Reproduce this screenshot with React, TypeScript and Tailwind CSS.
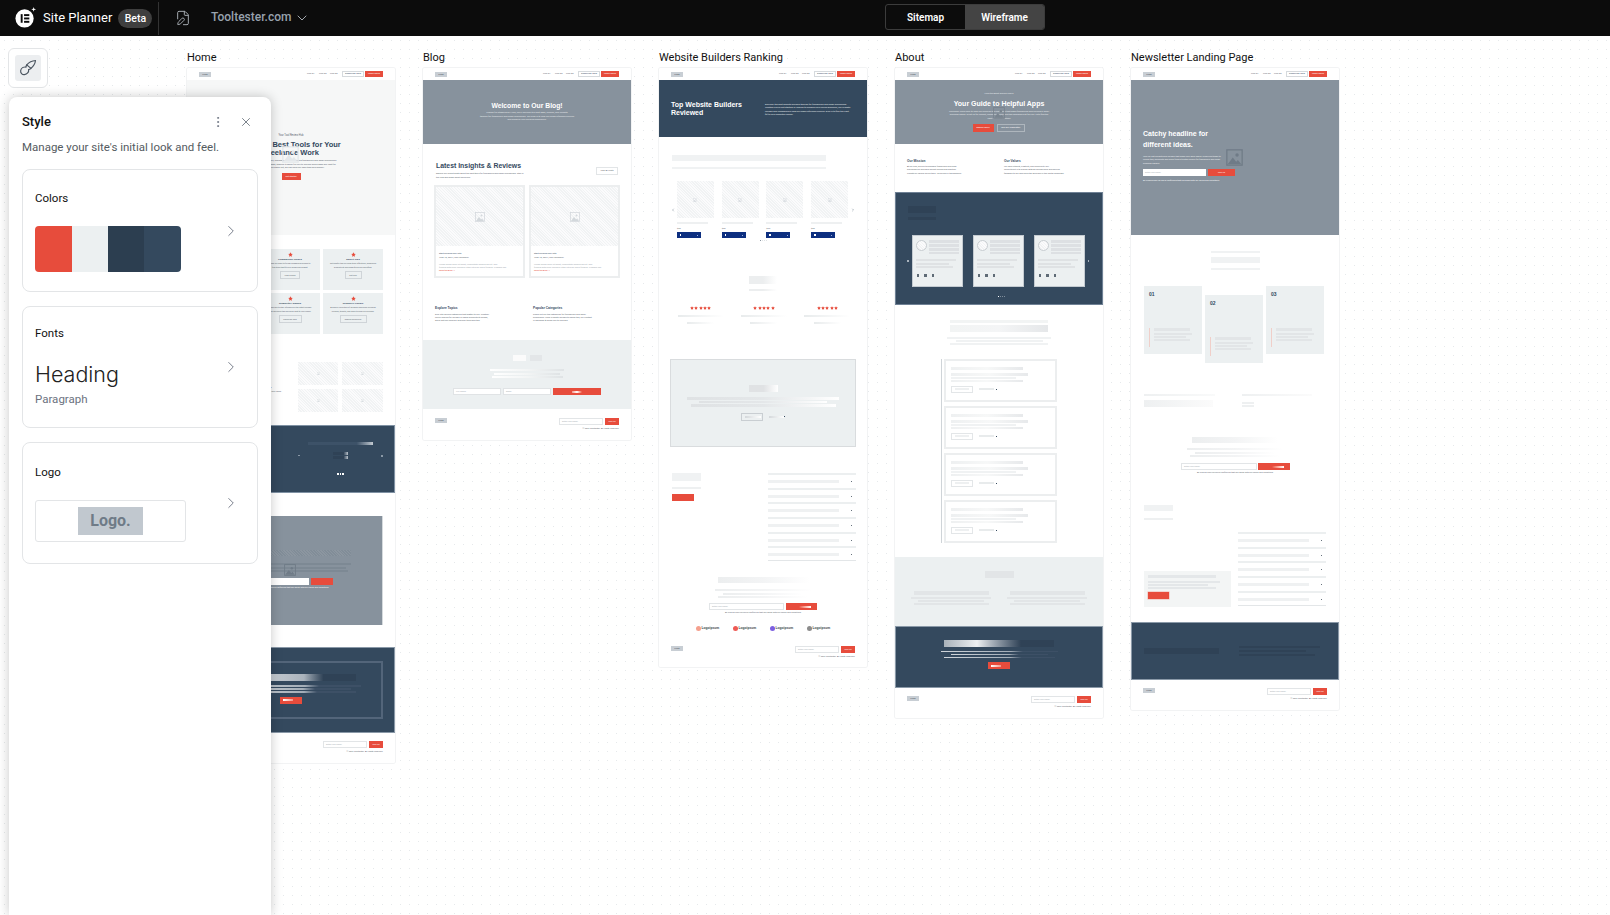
import React from "react";
import { ChevronDown, ChevronRight, EllipsisVertical, FilePen, X } from "lucide-react";

const WIRE = "font-['Liberation_Sans',Arial,sans-serif]";
const HATCH = "bg-[repeating-linear-gradient(45deg,#f1f3f4_0px,#f1f3f4_1px,#fbfbfc_1px,#fbfbfc_2px)]";
const FRAME = "w-[208px] bg-white ring-1 ring-[#f2f3f4] rounded-[2px] flex flex-col overflow-hidden";

function Pic({ c = "w-[5px] h-[5px]", fill = "#d3d8dc" }: { c?: string; fill?: string }) {
  return (
    <svg viewBox="0 0 20 20" className={c}>
      <rect x="1" y="1" width="18" height="18" fill="none" stroke={fill} strokeWidth="1.5" />
      <circle cx="13" cy="7" r="2" fill={fill} />
      <path d="M2 18l6-8 4 5 2-2 4 5z" fill={fill} />
    </svg>
  );
}

function Star({ c = "w-[5px] h-[5px]" }: { c?: string }) {
  return (
    <svg viewBox="0 0 20 20" className={`${c} shrink-0`}>
      <path d="M10 1l2.800 5.800 6.200.9-4.500 4.400 1.100 6.400L10 15.500 4.400 18.500l1.100-6.400L1 7.700l6.200-.9z" fill="#e74c3c" />
    </svg>
  );
}

function Nav() {
  return (
    <div className="h-[12px] shrink-0 flex items-center justify-between pl-[12px] pr-[12px] bg-white">
      <div className="w-[12px] h-[5px] bg-[#c8ced4] text-[2.500px] leading-[5px] text-center text-[#4a5560]">Logo</div>
      <div className="flex items-center text-[2.400px] text-[#5c6670]">
        <span className="w-[12px]">Link 01</span>
        <span className="w-[11px]">Link 02</span>
        <span className="w-[12px]">Link 03</span>
        <span className="w-[22px] h-[6px] border border-[#d6dadd] leading-[4px] text-center text-[#34495e]">Subscribe Now</span>
        <span className="w-[18px] h-[6px] ml-[1px] bg-[#e74c3c] leading-[6px] text-center text-white">Learn More</span>
      </div>
    </div>
  );
}

function Footer({ h = "h-[30px]", pt = "pt-[8px]" }: { h?: string; pt?: string }) {
  return (
    <div className={`${h} ${pt} shrink-0 px-[12px] flex justify-between items-start bg-white`}>
      <div className="w-[12px] h-[5px] bg-[#c8ced4] text-[2.500px] leading-[5px] text-center text-[#4a5560]">Logo</div>
      <div className="flex flex-col items-end">
        <div className="flex gap-[2px]">
          <div className="w-[44px] h-[7px] border border-[#e2e5e7] px-[2px] text-[2.200px] leading-[5px] text-[#a8aeb4]">Enter your email</div>
          <div className="w-[14px] h-[7px] bg-[#e74c3c] text-[2.200px] leading-[7px] text-center text-white">Join Us</div>
        </div>
        <div className="mt-[2px] text-[2.200px] leading-[4px] text-[#5c6670]">© 2024 Tooltester. All rights reserved.</div>
      </div>
    </div>
  );
}

function Faq({ rows, w = "w-[88px]" }: { rows: number; w?: string }) {
  return (
    <div className={`${w} border-b border-[#e3e6e8]`}>
      {Array.from({ length: rows }).map((_, i) => (
        <div key={i} className="h-[14.700px] border-t-2 border-[#eceff0] flex items-center justify-between pr-[4px]">
          <div className="w-[71px] h-[3px] bg-[#eff1f2]" />
          <div className="w-[1px] h-[1px] bg-[#67727d]" />
        </div>
      ))}
    </div>
  );
}

function HomePage() {
  const cards = [
    ["Comparison Guides", "Read our easy-to-follow comparison guides to", "find tools that fit your needs and budget.", "View Guides", "w-[20px]"],
    ["Expert Tips", "Get helpful tips on using tools effectively, enhancing", "productivity and simplifying your workflow.", "Get Tips", "w-[17px]"],
    ["Newsletter Signup", "Subscribe to stay informed on the latest reviews", "and exclusive tips delivered right to your inbox!", "Subscribe Now", "w-[23px]"],
    ["Resource Library", "Access a collection of valuable resources including", "e-books, toolkits, and more to help you succeed.", "Explore Resources", "w-[27px]"],
  ];
  return (
    <div className={`${FRAME} h-[695px]`}>
      <Nav />
      <div className="h-[155px] shrink-0 bg-[#f6f7f7] flex flex-col items-center pt-[54px] relative">
        <div className="text-[2.600px] leading-[4px] text-[#5c6670]">Your Tool Review Hub</div>
        <div className={`${WIRE} mt-[3px] text-[7.500px] leading-[8px] font-bold text-[#34495e] text-center whitespace-nowrap`}>
          Find the Best Tools for Your<br />Freelance Work
        </div>
        <p className="mt-[2px] text-[2.300px] leading-[3.500px] text-[#5c6670] text-center whitespace-nowrap">
          Looking for straightforward, unbiased reviews that help freelancers and small businesses<br />
          make sense of the best apps, making it easier for you to choose which apps are right for<br />
          your needs and stand out, we can help you save time and money!
        </p>
        <div className="mt-[3px] w-[19px] h-[7px] bg-[#e74c3c] text-[2.200px] leading-[7px] text-center text-white">Get Started</div>
        <div className="absolute left-[95px] top-[66px]"><Pic c="w-[17px] h-[17px]" fill="#e3e7ea" /></div>
      </div>
      <div className="h-[108px] shrink-0 pt-[14px] pr-[12px] flex justify-end">
        <div className="grid grid-cols-[60px_60px] auto-rows-[41px] gap-x-[3px] gap-y-[3px]">
          {cards.map((c) => (
            <div key={c[0]} className="bg-[#ecf0f1] flex flex-col items-center pt-[3px] text-center">
              <Star />
              <div className={`${WIRE} mt-[1px] text-[2.500px] leading-[4px] font-bold text-[#34495e]`}>{c[0]}</div>
              <div className="text-[2px] leading-[3.600px] text-[#5c6670] whitespace-nowrap">{c[1]}<br />{c[2]}</div>
              <div className={`${c[4]} mt-[1.500px] h-[8px] border border-[#cfd4d8] text-[2px] leading-[6px] text-[#5c6670]`}>{c[3]}</div>
            </div>
          ))}
        </div>
      </div>
      <div className="h-[82px] shrink-0 pt-[19px] pr-[12px] pl-[80px] flex">
        <div className="flex-1 pt-[24px] text-[2.100px] leading-[3.600px] text-[#5c6670] whitespace-nowrap">tools<br />with your inbox.</div>
        <div className="grid grid-cols-[40px_41px] auto-rows-[23px] gap-x-[4px] gap-y-[4px]">
          {[0, 1, 2, 3].map((i) => (
            <div key={i} className={`${HATCH} flex items-center justify-center`}><Pic c="w-[3px] h-[3px]" fill="#cfd5da" /></div>
          ))}
        </div>
      </div>
      <div className="h-[68px] shrink-0 bg-[#34495e] border border-[#8092a4] pt-[16px]">
        <div className="ml-[110px] w-[85px] flex flex-col items-center">
          <div className="w-[65px] h-[3px] bg-gradient-to-r from-[#3d5268] via-[#3d5268] via-75% to-[#c3cad1]" />
          <div className="w-full mt-[7px] flex items-center justify-between">
            <div className="w-[2px] h-[1px] bg-[#8a98a6]" />
            <div className="flex flex-col gap-[1px]">
              <div className="w-[15px] h-[3px] bg-gradient-to-r from-[#2f4256] via-[#2f4256] via-70% to-[#bcc4cc]" />
              <div className="w-[15px] h-[3px] bg-gradient-to-r from-[#2f4256] via-[#2f4256] via-70% to-[#bcc4cc]" />
            </div>
            <div className="w-[2px] h-[2px] bg-[#8a98a6]" />
          </div>
          <div className="mt-[14px] flex gap-[1px]">
            <div className="w-[1.500px] h-[2px] bg-white" />
            <div className="w-[1.500px] h-[2px] bg-white" />
            <div className="w-[1.500px] h-[2px] bg-white" />
          </div>
        </div>
      </div>
      <div className="mt-[23px] mx-[12px] h-[109px] shrink-0 bg-[#87929d] border-r border-[#d5dadd] flex flex-col items-center pt-[34px] relative">
        <div className="w-[120px] h-[6px] bg-[repeating-linear-gradient(45deg,#818d98_0px,#818d98_1px,#8c96a0_1px,#8c96a0_2px)]" />
        <div className="mt-[7px] w-[120px] h-[2px] bg-[#7d8994]" />
        <div className="mt-[1.500px] w-[110px] h-[2px] bg-[#7d8994]" />
        <div className="mt-[1.500px] w-[115px] h-[2px] bg-[#7d8994]" />
        <div className="mt-[6px] flex gap-[2px] ml-[-2px]">
          <div className="w-[63px] h-[7px] bg-white" />
          <div className="w-[22px] h-[7px] bg-[#e74c3c]" />
        </div>
        <div className="mt-[1px] text-[2.100px] leading-[4px] text-white whitespace-nowrap">By clicking Sign Up you're confirming that you agree with our Terms and Conditions</div>
        <div className="absolute left-[85px] top-[48px]"><Pic c="w-[12px] h-[12px]" fill="#6f7b87" /></div>
      </div>
      <div className="mt-[22px] h-[86px] shrink-0 bg-[#34495e] border border-[#8a99a8] pt-[13px] px-[11px]">
        <div className="h-[58px] border-2 border-[#53657a] flex flex-col items-center pt-[11px]">
          <div className="w-[130px] h-[7px] bg-gradient-to-r from-[#e8eaec] via-[#aab3bc] via-60% to-[#2f4256] to-75%" />
          <div className="mt-[4px] w-[140px] h-[1.500px] bg-gradient-to-r from-[#d8dcdf] via-[#a3adb7] via-60% to-[#3d5066] to-70%" />
          <div className="mt-[1.500px] w-[120px] h-[1.500px] bg-gradient-to-r from-[#d8dcdf] via-[#a3adb7] via-60% to-[#3d5066] to-70%" />
          <div className="mt-[1.500px] w-[130px] h-[1.500px] bg-gradient-to-r from-[#d8dcdf] via-[#a3adb7] via-60% to-[#3d5066] to-70%" />
          <div className="mt-[4px] w-[22px] h-[7px] bg-[#e74c3c] flex items-center px-[3px]">
            <div className="w-[10px] h-[2px] bg-gradient-to-r from-[#fff] to-[#f1958a]" />
          </div>
        </div>
      </div>
      <Footer />
    </div>
  );
}

function BlogPage() {
  const post = (
    <div className="h-[93px] border-2 border-[#eceeef] bg-white flex flex-col">
      <div className={`${HATCH} h-[59px] shrink-0 flex items-center justify-center`}><Pic c="w-[10px] h-[10px]" fill="#d3d8dc" /></div>
      <div className="pt-[6px] pl-[3px] text-[2.200px] leading-[4px] text-[#5c6670] whitespace-nowrap">
        <div className="text-[#34495e]">Start building your lists</div>
        <div>June 18, 2024 | The Freelancer</div>
        <div className="mt-[3px] leading-[3px] text-[#a2a9b0]">Lorem ipsum dolor sit amet, consectetur adipiscing elit. Sed<br />fringilla ante nunc convallis vitae ultricies libero fringilla. Vivamus nec.</div>
        <div className="text-[#e74c3c]">Read the Blog →</div>
      </div>
    </div>
  );
  return (
    <div className={`${FRAME} h-[372px]`}>
      <Nav />
      <div className="h-[64px] shrink-0 bg-[#87929d] flex flex-col items-center pt-[22px] text-white">
        <div className={`${WIRE} text-[6.800px] leading-[8px] font-bold`}>Welcome to Our Blog!</div>
        <p className="mt-[1px] text-[2.300px] leading-[3.500px] text-center whitespace-nowrap text-[#e6e9eb]">
          Thanks for stopping by! Here, you'll discover the best apps, reviews, and insights<br />
          tailored for freelancers and small businesses. Our goal is to help you make informed choices<br />
          and enhance your working experience.
        </p>
      </div>
      <div className="h-[142px] shrink-0 px-[11px] pt-[18px]">
        <div className="h-[23px] flex justify-between px-[2px]">
          <div>
            <div className={`${WIRE} text-[6.900px] leading-[8px] font-bold text-[#34495e]`}>Latest Insights &amp; Reviews</div>
            <p className="mt-[2px] text-[2.200px] leading-[3.700px] text-[#5c6670] whitespace-nowrap">Explore our recent posts about the best tools for freelancers and small businesses. Stay in<br />the loop and make smart decisions.</p>
          </div>
          <div className="mt-[5px] w-[22px] h-[8px] border border-[#e2e5e7] text-[2.100px] leading-[6px] text-center text-[#5c6670]">View All Posts</div>
        </div>
        <div className="grid grid-cols-[91px_91px] gap-[4px]">{post}{post}</div>
      </div>
      <div className="h-[54px] shrink-0 pl-[12px] pr-[10px] pt-[20px] flex gap-[12px]">
        <div className="w-[86px]">
          <div className={`${WIRE} text-[3.200px] leading-[4px] font-bold text-[#34495e]`}>Explore Topics</div>
          <p className="mt-[3px] text-[2.200px] leading-[3px] text-[#5c6670] whitespace-nowrap">Dive into various categories that matter to you. Whether<br />you're looking for reviews or handy productivity guides,<br />we've got you covered. Discover tools and tips.</p>
        </div>
        <div>
          <div className={`${WIRE} text-[3.200px] leading-[4px] font-bold text-[#34495e]`}>Popular Categories</div>
          <p className="mt-[3px] text-[2.200px] leading-[3px] text-[#5c6670] whitespace-nowrap">Check out our top categories for freelancers and small<br />businesses. From in-depth reviews to handy tips, our content<br />is designed to guide you to success.</p>
        </div>
      </div>
      <div className="h-[69px] shrink-0 bg-[#ecf0f1] flex flex-col items-center pt-[15px]">
        <div className="flex gap-[4px]">
          <div className="w-[13px] h-[6px] bg-[#fbfbfb]" />
          <div className="w-[12px] h-[6px] bg-[#e3e6e8]" />
        </div>
        <div className="mt-[8px] w-[74px] h-[2px] bg-gradient-to-r from-[#fff] via-[#f3f5f5] to-[#dfe3e5]" />
        <div className="mt-[1.500px] w-[66px] h-[2px] bg-gradient-to-r from-[#fff] via-[#f3f5f5] to-[#dfe3e5]" />
        <div className="mt-[1.500px] w-[71px] h-[2px] bg-gradient-to-r from-[#fff] via-[#f3f5f5] to-[#dfe3e5]" />
        <div className="mt-[10px] flex gap-[2px]">
          <div className="w-[48px] h-[7px] bg-white border border-[#e0e3e5] pl-[2px] text-[2.200px] leading-[5px] text-[#a8aeb4]">Full Name</div>
          <div className="w-[48px] h-[7px] bg-white border border-[#e0e3e5] pl-[2px] text-[2.200px] leading-[5px] text-[#a8aeb4]">Email</div>
          <div className="w-[48px] h-[7px] bg-[#e74c3c] flex items-center justify-center">
            <div className="w-[10px] h-[2px] bg-gradient-to-r from-[#f1958a] via-[#fff] to-[#e74c3c]" />
          </div>
        </div>
      </div>
      <Footer h="h-[31px]" pt="pt-[9px]" />
    </div>
  );
}

function WbrPage() {
  const products = ["$29", "$29", "$29", "$39"];
  const LogoItem = ({ c }: { c: string }) => (
    <div className="w-[24px] flex items-center gap-[1px]">
      <div className={`${c} w-[5px] h-[5px] rounded-full shrink-0`} />
      <span className={`${WIRE} text-[3.300px] font-bold text-[#3b4650]`}>Logoipsum</span>
    </div>
  );
  return (
    <div className={`${FRAME} h-[599px]`}>
      <Nav />
      <div className="h-[57px] shrink-0 bg-[#34495e] flex pl-[12px] pt-[21px] text-white">
        <div className={`${WIRE} w-[94px] text-[7px] leading-[8px] font-bold whitespace-nowrap`}>Top Website Builders<br />Reviewed</div>
        <p className="pt-[2px] text-[2.300px] leading-[3.400px] whitespace-nowrap text-[#e6e9eb]">
          Discover the best website builders tailored for freelancers and small businesses.<br />
          Whether you're just starting or looking to enhance your online presence, our in-depth<br />
          reviews and comparisons help you make informed choices. Dive in to find the right<br />
          fit for your website's needs!
        </p>
      </div>
      <div className="h-[123px] shrink-0 pt-[18px] px-[13px]">
        <div className="w-[154px] h-[6px] bg-[#f0f2f3]" />
        <div className="w-[154px] h-[2px] mt-[6px] bg-[#f0f2f3]" />
        <div className="mt-[12px] flex items-start -mx-[1px]">
          <div className="w-[6px] pt-[27px]"><ChevronRight className="w-[4px] h-[4px] rotate-180 text-[#34495e]" /></div>
          <div className="flex gap-[7.700px]">
            {products.map((p, i) => (
              <div key={i} className="w-[37px]">
                <div className={`${HATCH} h-[37px] flex items-center justify-center`}><Pic c="w-[4px] h-[4px]" fill="#cfd5da" /></div>
                <div className="mt-[4px] w-[31px] h-[2px] bg-[#eef0f1]" />
                <div className="mt-[3px] text-[2.300px] leading-[4px] text-[#5c6670]">{p}</div>
                <div className="mt-[1px] w-[24px] h-[6px] bg-[#0d2f80] flex items-center justify-between px-[3px]">
                  <div className="w-[1.500px] h-[1.500px] bg-white" />
                  <div className="w-[0.800px] h-[0.800px] bg-[#9bb0de]" />
                </div>
              </div>
            ))}
          </div>
          <div className="ml-[3px] pt-[27px]"><ChevronRight className="w-[4px] h-[4px] text-[#34495e]" /></div>
        </div>
        <div className="mt-[2px] flex justify-center gap-[1px]">
          <div className="w-[1px] h-[1px] bg-[#8a95a0]" />
          <div className="w-[1px] h-[1px] bg-[#e1e4e6]" />
          <div className="w-[1px] h-[1px] bg-[#e1e4e6]" />
          <div className="w-[1px] h-[1px] bg-[#e1e4e6]" />
        </div>
      </div>
      <div className="h-[99px] shrink-0 pt-[16px] flex flex-col items-center">
        <div className="w-[28px] h-[8px] bg-gradient-to-r from-[#eceeef] via-[#eceeef] to-white" />
        <div className="w-[28px] h-[2px] mt-[5px] bg-gradient-to-r from-[#eceeef] via-[#eceeef] to-white" />
        <div className="mt-[15px] w-full pl-[18px] pr-[16px] grid grid-cols-3 gap-[16px]">
          {[0, 1, 2].map((i) => (
            <div key={i} className="flex flex-col items-center">
              <div className="flex gap-[0.300px]">{[0, 1, 2, 3, 4].map((s) => <Star key={s} c="w-[4px] h-[4px]" />)}</div>
              <div className="mt-[5px] w-[46px] h-[2px] bg-gradient-to-r from-[#e8ebec] to-white" />
              <div className="mt-[5px] w-[27px] h-[2px] bg-gradient-to-r from-[#e8ebec] to-white" />
            </div>
          ))}
        </div>
      </div>
      <div className="mx-[11px] h-[88px] shrink-0 bg-[#ecf0f1] border border-[#d9dcde] flex flex-col items-center pt-[25px]">
        <div className="w-[29px] h-[7px] bg-gradient-to-r from-[#e0e2e4] via-[#e0e2e4] to-white" />
        <div className="mt-[5px] w-[152px] h-[2.500px] bg-gradient-to-r from-[#dfe2e4] via-[#e4e7e9] to-white" />
        <div className="mt-[1px] w-[128px] h-[2.500px] bg-gradient-to-r from-[#dfe2e4] via-[#e4e7e9] to-white" />
        <div className="mt-[1px] w-[145px] h-[2.500px] bg-gradient-to-r from-[#dfe2e4] via-[#e4e7e9] to-white" />
        <div className="mt-[6px] flex items-center gap-[6px]">
          <div className="w-[22px] h-[8px] border border-[#c9ced2] flex items-center pl-[3px]"><div className="w-[16px] h-[2px] bg-gradient-to-r from-[#d4d8db] to-white" /></div>
          <div className="w-[15px] h-[2px] bg-gradient-to-r from-[#d4d8db] to-white" />
          <div className="w-[1px] h-[1px] -ml-[6px] bg-[#34495e]" />
        </div>
      </div>
      <div className="h-[114px] shrink-0 pt-[26px] pl-[13px] pr-[11px] flex justify-between">
        <div>
          <div className="w-[29px] h-[8px] bg-[#f0f2f3]" />
          <div className="mt-[6px] w-[29px] h-[2px] bg-[#eef0f1]" />
          <div className="mt-[5px] w-[22px] h-[7px] bg-[#e74c3c]" />
        </div>
        <Faq rows={6} />
      </div>
      <div className="h-[79px] shrink-0 pt-[16px] flex flex-col items-center">
        <div className="w-[92px] h-[6px] ml-[2px] bg-gradient-to-r from-[#eceeef] via-[#f3f4f5] to-white" />
        <div className="mt-[6px] w-[97px] h-[2px] bg-gradient-to-r from-[#eceeef] via-[#f3f4f5] to-white" />
        <div className="mt-[1.500px] w-[80px] h-[2px] bg-gradient-to-r from-[#eceeef] via-[#f3f4f5] to-white" />
        <div className="mt-[1.500px] w-[90px] h-[2px] bg-gradient-to-r from-[#eceeef] via-[#f3f4f5] to-white" />
        <div className="mt-[5px] flex gap-[2px]">
          <div className="w-[75px] h-[7px] border border-[#e2e5e7] pl-[2px] text-[2.200px] leading-[5px] text-[#a8aeb4]">Enter your email</div>
          <div className="w-[31px] h-[7px] bg-[#e74c3c] flex items-center justify-end pr-[6px]"><div className="w-[12px] h-[2px] bg-gradient-to-r from-[#e74c3c] to-white" /></div>
        </div>
        <div className="text-[2.100px] leading-[5px] text-[#5c6670]">By clicking Sign Up you're confirming that you agree with our Terms and Conditions</div>
        <div className="mt-[11px] flex gap-[13px]">
          <LogoItem c="bg-[#f5a08e]" />
          <LogoItem c="bg-[#ee5a55]" />
          <LogoItem c="bg-[#7c5fe0]" />
          <LogoItem c="bg-[#8c8c8c]" />
        </div>
      </div>
      <Footer h="h-[27px]" pt="pt-[6px]" />
    </div>
  );
}

function AboutPage() {
  const Person = () => (
    <div className="w-[51px] h-[52px] bg-[#ecf0f1] border border-[#c4cbd1] pl-[3px] pr-[3px] pt-[4px]">
      <div className="flex gap-[2px]">
        <div className={`${HATCH} w-[11px] h-[11px] rounded-full border border-[#c9ced2] shrink-0`} />
        <div className="flex-1 flex flex-col gap-[1px]">
          <div className="h-[3px] bg-[#dde0e3]" />
          <div className="h-[3px] bg-[#dde0e3]" />
          <div className="h-[3px] bg-[#dde0e3]" />
          <div className="h-[2px] bg-[#dde0e3]" />
        </div>
      </div>
      <div className="mt-[5px] w-[40px] h-[2px] bg-[#dfe2e4]" />
      <div className="mt-[1.500px] w-[33px] h-[2px] bg-[#dfe2e4]" />
      <div className="mt-[1.500px] w-[37px] h-[2px] bg-[#dfe2e4]" />
      <div className="mt-[6px] flex gap-[5px] pl-[1px]">
        <div className="w-[2.500px] h-[2.500px] bg-[#5f6b76]" />
        <div className="w-[2.500px] h-[2.500px] bg-[#5f6b76]" />
        <div className="w-[2.500px] h-[2.500px] bg-[#5f6b76]" />
      </div>
    </div>
  );
  const Row = ({ last }: { last?: boolean }) => (
    <div className={`${last ? "h-[43px]" : "h-[43px] mb-[4px]"} border-2 border-[#eceeef] px-[5px] pt-[6px]`}>
      <div className="w-[72px] h-[3px] bg-gradient-to-r from-[#eef0f1] via-[#f7f8f8] to-[#e7e9eb]" />
      <div className="mt-[3px] w-[77px] h-[2.500px] bg-gradient-to-r from-[#eef0f1] via-[#f7f8f8] to-[#e7e9eb]" />
      <div className="mt-[1px] w-[65px] h-[2px] bg-[#f0f2f3]" />
      <div className="mt-[1px] w-[72px] h-[2px] bg-gradient-to-r from-[#eef0f1] via-[#f7f8f8] to-[#e7e9eb]" />
      <div className="mt-[4px] flex items-center gap-[6px]">
        <div className="w-[22px] h-[7px] border border-[#e3e6e8] flex items-center pl-[3px]"><div className="w-[14px] h-[2px] bg-[#eef0f1]" /></div>
        <div className="w-[15px] h-[2px] bg-[#e8ebec]" />
        <div className="w-[1px] h-[1px] -ml-[4px] bg-[#34495e]" />
      </div>
    </div>
  );
  return (
    <div className={`${FRAME} h-[650px]`}>
      <Nav />
      <div className="h-[64px] shrink-0 bg-[#87929d] flex flex-col items-center pt-[12px] text-white relative">
        <div className="text-[2.500px] leading-[4px] text-[#e6e9eb]">Find the Best Online Tools</div>
        <div className={`${WIRE} mt-[3px] text-[7px] leading-[9px] font-bold`}>Your Guide to Helpful Apps</div>
        <p className="mt-[2px] text-[2.300px] leading-[3.400px] text-center whitespace-nowrap text-[#e6e9eb]">
          Welcome! We're here to help you discover the best apps that make freelancing and running a small<br />
          business easier. Trust us for honest, unbiased guides and tips designed just for you. Let's find the<br />
          right solution together!
        </p>
        <div className="mt-[4px] flex gap-[3px] -ml-[1px]">
          <div className="w-[21px] h-[7.500px] bg-[#e74c3c] text-[2.200px] leading-[7.500px] text-center">Explore Tools</div>
          <div className="w-[28px] h-[7.500px] border border-[#aeb6bd] text-[2.200px] leading-[5.500px] text-center">Join Our Newsletter</div>
        </div>
        <div className="absolute left-[98px] top-[27px]"><Pic c="w-[12px] h-[12px]" fill="#79848f" /></div>
      </div>
      <div className="h-[48px] shrink-0 pt-[15px] pl-[12px] flex gap-[17px]">
        <div className="w-[80px]">
          <div className={`${WIRE} text-[3.200px] leading-[4px] font-bold text-[#34495e]`}>Our Mission</div>
          <p className="mt-[2px] text-[2.100px] leading-[3.300px] text-[#5c6670] whitespace-nowrap">At our core, we aim to empower freelancers and small<br />businesses by providing honest reviews and practical<br />insights on various online tools. We believe in transparency.</p>
        </div>
        <div>
          <div className={`${WIRE} text-[3.200px] leading-[4px] font-bold text-[#34495e]`}>Our Values</div>
          <p className="mt-[2px] text-[2.100px] leading-[3.300px] text-[#5c6670] whitespace-nowrap">We value integrity, creativity, and community. Our<br />commitment is to provide detailed comparisons and genuine<br />feedback to you who value the decisions in this digital landscape.</p>
        </div>
      </div>
      <div className="h-[113px] shrink-0 bg-[#34495e] border border-[#6f8195] pl-[11.500px] pr-[6px] pt-[13px]">
        <div className="w-[28px] h-[7px] bg-[#2f4256]" />
        <div className="w-[28px] h-[3px] mt-[4px] bg-[#2f4256]" />
        <div className="mt-[15px] flex items-center -ml-[0.500px]">
          <div className="w-[1.500px] h-[2px] bg-[#a9b3bd]" />
          <div className="flex gap-[10px] ml-[3px]"><Person /><Person /><Person /></div>
          <div className="w-[1.500px] h-[2px] ml-[3px] bg-[#a9b3bd]" />
        </div>
        <div className="mt-[9px] flex justify-center gap-[1px]">
          <div className="w-[1px] h-[1px] bg-white" />
          <div className="w-[1px] h-[1px] bg-[#7f8d9b]" />
          <div className="w-[1px] h-[1px] bg-[#7f8d9b]" />
          <div className="w-[1px] h-[1px] bg-[#7f8d9b]" />
        </div>
      </div>
      <div className="h-[252px] shrink-0 pt-[15px] flex flex-col items-center">
        <div className="w-[98px] h-[3px] bg-[#f2f4f4]" />
        <div className="w-[98px] h-[7px] mt-[2px] bg-gradient-to-r from-[#f2f4f4] via-[#f4f5f6] to-[#e5e7e9]" />
        <div className="w-[104px] h-[2px] mt-[5px] bg-[#f0f2f3]" />
        <div className="w-[87px] h-[2px] mt-[1px] bg-[#f0f2f3]" />
        <div className="w-[98px] h-[2px] mt-[1px] bg-[#f0f2f3]" />
        <div className="mt-[14px] flex gap-[2px] ml-[-1px]">
          <div className="w-px bg-[#cfd4d8]" />
          <div className="w-[113px]"><Row /><Row /><Row /><Row last /></div>
        </div>
      </div>
      <div className="h-[69px] shrink-0 bg-[#ecf0f1] flex flex-col items-center pt-[14px]">
        <div className="w-[29px] h-[7px] bg-[#e2e5e7]" />
        <div className="mt-[13px] w-full flex justify-center gap-[16px]">
          {[0, 1].map((i) => (
            <div key={i} className="flex flex-col items-center">
              <div className="w-[75px] h-[3.500px] bg-[#e2e5e7]" />
              <div className="mt-[2px] w-[80px] h-[2px] bg-[#e2e5e7]" />
              <div className="mt-[1px] w-[66px] h-[2px] bg-[#e2e5e7]" />
              <div className="mt-[1px] w-[75px] h-[2px] bg-[#e2e5e7]" />
            </div>
          ))}
        </div>
      </div>
      <div className="h-[62px] shrink-0 bg-[#34495e] border border-[#8a99a8] flex flex-col items-center pt-[13px]">
        <div className="w-[110px] h-[7px] bg-gradient-to-r from-[#a9b2ba] via-[#eef0f2] via-30% to-[#2f4256] to-70%" />
        <div className="mt-[3.500px] w-[117px] h-[1.500px] bg-gradient-to-r from-[#d0d5da] via-[#a3adb7] via-60% to-[#3d5066] to-70%" />
        <div className="mt-[1.500px] w-[97px] h-[1.500px] bg-gradient-to-r from-[#d0d5da] via-[#a3adb7] via-60% to-[#3d5066] to-70%" />
        <div className="mt-[1.500px] w-[111px] h-[1.500px] bg-gradient-to-r from-[#d0d5da] via-[#a3adb7] via-60% to-[#3d5066] to-70%" />
        <div className="mt-[4px] w-[22px] h-[7px] bg-[#e74c3c] flex items-center px-[3px]">
          <div className="w-[10px] h-[2px] bg-gradient-to-r from-[#fff] to-[#f1958a]" />
        </div>
      </div>
      <Footer />
    </div>
  );
}

function NewsletterPage() {
  const Step = ({ n, c }: { n: string; c: string }) => (
    <div className={`${c} w-[58px] h-[68px] bg-[#ecf0f1] flex flex-col pl-[5px] pt-[5px]`}>
      <div className={`${WIRE} text-[5px] leading-[6px] font-bold text-[#34495e]`}>{n}</div>
      <div className="mt-auto mb-[7px] border-l border-[#f0cfc9] pl-[4px] -ml-[0.500px] h-[19px]">
        <div className="w-[36px] h-[3px] bg-[#e2e5e7]" />
        <div className="mt-[2px] w-[38px] h-[2px] bg-[#e2e5e7]" />
        <div className="mt-[1px] w-[32px] h-[2px] bg-[#e2e5e7]" />
        <div className="mt-[1px] w-[36px] h-[2px] bg-[#e2e5e7]" />
      </div>
    </div>
  );
  return (
    <div className={`${FRAME} h-[642px]`}>
      <Nav />
      <div className="h-[155px] shrink-0 bg-[#87929d] pl-[12px] pt-[48px] text-white relative">
        <div className={`${WIRE} text-[7px] leading-[11px] font-bold`}>Catchy headline for<br />different ideas.</div>
        <p className="mt-[5px] text-[2.200px] leading-[3.300px] whitespace-nowrap text-[#eef0f1]">
          Join us! Get insights and reviews that make your work easier. Subscribe today to<br />
          unlock tips, discounts and more from a trusted source for freelancers and small<br />
          business owners.
        </p>
        <div className="mt-[4px] flex gap-[2px]">
          <div className="w-[63px] h-[7px] bg-white pl-[2px] text-[2.200px] leading-[7px] text-[#a8aeb4]">Enter your email</div>
          <div className="w-[27px] h-[7px] bg-[#e74c3c] text-[2.200px] leading-[7px] text-center">Join Us</div>
        </div>
        <div className="mt-[3px] text-[2.100px] leading-[4px] whitespace-nowrap">By clicking Sign Up you're confirming that you agree with our Terms and Conditions</div>
        <div className="absolute left-[95px] top-[69px]"><Pic c="w-[17px] h-[17px]" fill="#6f7b87" /></div>
      </div>
      <div className="h-[140px] shrink-0 pt-[16px] px-[13px] flex flex-col">
        <div className="flex flex-col items-center">
          <div className="w-[49px] h-[2px] bg-[#f0f2f3]" />
          <div className="w-[49px] h-[6px] mt-[4px] bg-[#f0f2f3]" />
          <div className="w-[49px] h-[2px] mt-[5px] bg-[#f0f2f3]" />
        </div>
        <div className="mt-[16px] flex items-start gap-[3px]">
          <Step n="01" c="" />
          <Step n="02" c="mt-[9px]" />
          <Step n="03" c="" />
        </div>
      </div>
      <div className="h-[50px] shrink-0 pt-[19px] px-[13px] flex gap-[27px]">
        <div className="w-[71px]">
          <div className="h-[2px] bg-gradient-to-r from-[#eef0f1] to-[#f9fafa]" />
          <div className="mt-[4px] w-[69px] h-[7px] bg-gradient-to-r from-[#eef0f1] to-[#fbfbfb]" />
        </div>
        <div>
          <div className="w-[70px] h-[2px] bg-gradient-to-r from-[#eef0f1] to-[#fbfbfb]" />
          <div className="mt-[6px] w-[12px] h-[2px] bg-[#eef0f1]" />
          <div className="mt-[1px] w-[12px] h-[2px] bg-[#eef0f1]" />
        </div>
      </div>
      <div className="h-[65px] shrink-0 pt-[12px] flex flex-col items-center">
        <div className="w-[86px] h-[6px] bg-gradient-to-r from-[#eceeef] via-[#f3f4f5] to-white" />
        <div className="mt-[5px] w-[96px] h-[2px] bg-gradient-to-r from-[#eceeef] via-[#f3f4f5] to-white" />
        <div className="mt-[1.500px] w-[80px] h-[2px] bg-gradient-to-r from-[#eceeef] via-[#f3f4f5] to-white" />
        <div className="mt-[1.500px] w-[90px] h-[2px] bg-gradient-to-r from-[#eceeef] via-[#f3f4f5] to-white" />
        <div className="mt-[6px] flex gap-[1px] ml-[1px]">
          <div className="w-[76px] h-[7px] border border-[#e2e5e7] pl-[2px] text-[2.200px] leading-[5px] text-[#a8aeb4]">Enter your email</div>
          <div className="w-[32px] h-[7px] bg-[#e74c3c] flex items-center justify-end pr-[6px]"><div className="w-[12px] h-[2px] bg-gradient-to-r from-[#e74c3c] to-white" /></div>
        </div>
        <div className="text-[2.100px] leading-[5px] text-[#5c6670]">By clicking Sign Up you're confirming that you agree with our Terms and Conditions</div>
      </div>
      <div className="h-[132px] shrink-0 pt-[15px] pl-[13px] pr-[13px] flex justify-between">
        <div className="flex flex-col">
          <div className="w-[29px] h-[6px] bg-[#f0f2f3]" />
          <div className="mt-[7px] w-[29px] h-[2px] bg-[#eef0f1]" />
          <div className="mt-[51px] w-[87px] h-[36px] bg-[#f3f5f5] pl-[4px] pt-[4px]">
            <div className="w-[68px] h-[3px] bg-[#e4e7e9]" />
            <div className="mt-[3px] w-[72px] h-[2px] bg-[#e4e7e9]" />
            <div className="mt-[1px] w-[60px] h-[2px] bg-[#e4e7e9]" />
            <div className="mt-[1px] w-[68px] h-[2px] bg-[#e4e7e9]" />
            <div className="mt-[3px] w-[21px] h-[7px] bg-[#e74c3c] ring-[0.5px] ring-[#f1b4ac]" />
          </div>
        </div>
        <div className="pt-[27px]"><Faq rows={5} /></div>
      </div>
      <div className="h-[58px] shrink-0 bg-[#34495e] border border-[#8a99a8] pl-[12px] pr-[18px] flex items-center justify-between">
        <div className="w-[75px] h-[6px] bg-[#2f4256]" />
        <div className="flex flex-col gap-[2px]">
          <div className="w-[81px] h-[2px] bg-[#2f4256]" />
          <div className="w-[67px] h-[2px] bg-[#2f4256]" />
          <div className="w-[76px] h-[2px] bg-[#2f4256]" />
        </div>
      </div>
      <Footer />
    </div>
  );
}

function Sheet({ title, children }: { title: string; children: React.ReactNode }) {
  return (
    <div className="w-[208px] shrink-0">
      <div className="h-[20px] pt-[1px] text-[11px] leading-[18px] text-[#111] whitespace-nowrap">{title}</div>
      {children}
    </div>
  );
}

function Card({ h, label, children }: { h: string; label: string; children: React.ReactNode }) {
  return (
    <div className={`${h} border border-[#e3e5e7] rounded-[8px] flex items-center justify-between pl-[12px] pr-[17px]`}>
      <div className="flex flex-col">
        <div className="text-[11.500px] leading-[16px] text-[#111]">{label}</div>
        {children}
      </div>
      <ChevronRight className="w-[18px] h-[18px] text-[#6b7280]" strokeWidth={1.2} />
    </div>
  );
}

export default function App() {
  return (
    <div className="w-[1610px] h-[915px] overflow-hidden flex flex-col font-[Roboto,sans-serif] bg-white">
      <header className="h-[36px] shrink-0 bg-[#0c0c0c] flex items-center text-white relative">
        <div className="w-[159px] h-[33px] flex items-center pl-[14px] border-r border-[#333]">
          <svg viewBox="0 0 24 24" className="w-[23px] h-[23px] shrink-0 -mt-[2px]">
            <circle cx="11" cy="13" r="9.500" fill="#fff" />
            <rect x="7" y="8.500" width="2" height="9" fill="#0c0c0c" />
            <rect x="10.500" y="8.500" width="5.500" height="2" fill="#0c0c0c" />
            <rect x="10.500" y="12" width="5.500" height="2" fill="#0c0c0c" />
            <rect x="10.500" y="15.500" width="5.500" height="2" fill="#0c0c0c" />
            <path d="M20.500 1l.6 1.900 1.900.6-1.900.6-.6 1.900-.6-1.900-1.900-.6 1.900-.6z" fill="#fff" />
          </svg>
          <span className="ml-[6px] text-[13px] whitespace-nowrap">Site Planner</span>
          <span className="ml-[6px] h-[19px] w-[34px] rounded-full bg-[#3f3f3f] text-[10.500px] font-medium leading-[19px] text-center shrink-0">Beta</span>
        </div>
        <FilePen className="ml-[16px] w-[16px] h-[16px] text-[#a3a9af]" strokeWidth={1.5} />
        <span className="ml-[20px] -mt-[3px] text-[12px] font-medium text-[#98a2ad] whitespace-nowrap">Tooltester.com</span>
        <ChevronDown className="ml-[3px] w-[16px] h-[16px] text-[#a3a9af]" strokeWidth={1.5} />
        <div className="absolute left-[885px] top-[4px] h-[26px] w-[160px] rounded-[3px] border border-[#3c3c3c] flex overflow-hidden text-[10px] font-semibold">
          <div className="w-[79px] flex items-center justify-center">Sitemap</div>
          <div className="flex-1 bg-[#444] flex items-center justify-center">Wireframe</div>
        </div>
      </header>
      <main className="flex-1 relative pl-[187px] pt-[12px] flex items-start gap-[28px] bg-[radial-gradient(circle,#e6e9eb_0.6px,transparent_0.7px)] bg-[size:9px_9px]">
        <Sheet title="Home"><HomePage /></Sheet>
        <Sheet title="Blog"><BlogPage /></Sheet>
        <Sheet title="Website Builders Ranking"><WbrPage /></Sheet>
        <Sheet title="About"><AboutPage /></Sheet>
        <Sheet title="Newsletter Landing Page"><NewsletterPage /></Sheet>

        <div className="absolute left-[8px] top-[12px] w-[40px] h-[40px] bg-white border border-[#e3e5e7] rounded-[6px] flex items-center justify-center">
          <div className="w-[26px] h-[26px] rounded-[3px] bg-[#eceef0] flex items-center justify-center">
            <svg viewBox="0 0 24 24" className="w-[20px] h-[20px]" fill="none" stroke="#4b5560" strokeWidth="1.400" strokeLinecap="round" strokeLinejoin="round">
              <path d="M21 3c-4 .3-8 2.300-10.500 5.200l5 4.300C18.500 10 20.500 7 21 3z" />
              <path d="M10.500 8.200c-.6 1-.9 1.800-1 2.600M15.500 12.500c-.9.700-1.800 1.200-2.700 1.300" />
              <path d="M9.500 10.800c-2.800-.3-5.800 1.200-6.300 4.300-.4 2.800 1.800 5.200 4.500 4.900 3.200-.3 5.500-3 5.100-6.200" />
            </svg>
          </div>
        </div>

        <aside className="absolute left-[9px] top-[61px] bottom-0 w-[262px] bg-white rounded-t-[8px] shadow-[0_0_12px_rgba(0,0,0,0.22)] px-[13px] pt-[15px]">
          <div className="h-[20px] flex items-center justify-between pr-[3px]">
            <span className="text-[13px] font-medium text-[#111]">Style</span>
            <div className="flex items-center gap-[14px] pr-[2px]">
              <EllipsisVertical className="w-[14px] h-[14px] text-[#6b7280]" strokeWidth={1.5} />
              <X className="w-[14px] h-[14px] text-[#4b5560]" strokeWidth={1.25} />
            </div>
          </div>
          <p className="mt-[7px] h-[16px] text-[11.500px] leading-[16px] text-[#555b61] whitespace-nowrap">Manage your site's initial look and feel.</p>
          <div className="mt-[14px] flex flex-col gap-[14px] w-[236px]">
            <Card h="h-[123px]" label="Colors">
              <div className="mt-[20px] w-[146px] h-[46px] rounded-[4px] overflow-hidden flex">
                <div className="w-[37px] bg-[#e74c3c]" />
                <div className="w-[36px] bg-[#ecf0f1]" />
                <div className="w-[36px] bg-[#2c3e50]" />
                <div className="flex-1 bg-[#34495e]" />
              </div>
            </Card>
            <Card h="h-[122px]" label="Fonts">
              <div className="mt-[17px] text-[21.500px] leading-[32px] font-[Inter,sans-serif] font-light text-[#222]">Heading</div>
              <div className="mt-[1px] pb-[2px] text-[11.500px] leading-[16px] text-[#6b7280]">Paragraph</div>
            </Card>
            <Card h="h-[122px]" label="Logo">
              <div className="mt-[20px] w-[151px] h-[42px] border border-[#e3e5e7] rounded-[3px] flex items-center justify-center">
                <div className="w-[65px] h-[28px] bg-[#c1c8cf] text-[16px] font-bold leading-[28px] text-center text-[#6f7b87]">Logo.</div>
              </div>
            </Card>
          </div>
        </aside>
      </main>
    </div>
  );
}
